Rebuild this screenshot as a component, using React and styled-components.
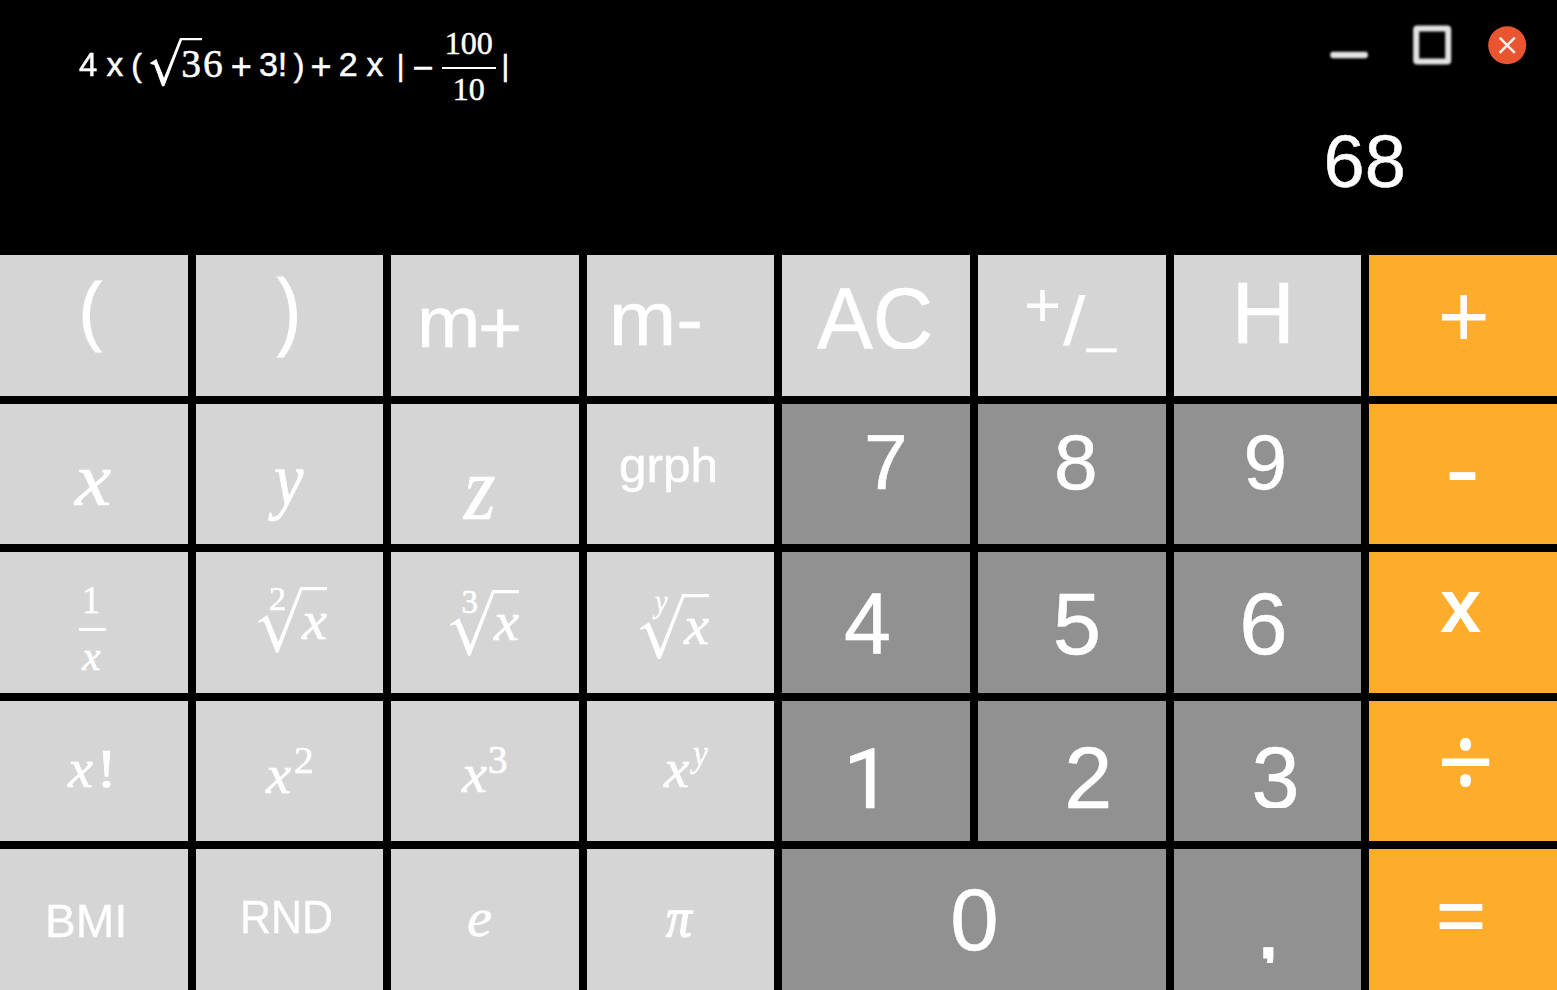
import React from 'react';
import styled, { createGlobalStyle, css } from 'styled-components';

const GlobalStyle = createGlobalStyle`
  * { box-sizing: border-box; }
  body { margin: 0; background: #000; overflow: hidden; }
`;

const SANS = '"Liberation Sans", Arial, sans-serif';
const SERIF = '"Liberation Serif", "Times New Roman", serif';

// Ascent and descent in em, used to seat each run on its baseline.
const faces = {
  sans: { family: SANS, ascent: 0.905, descent: 0.212 },
  bold: { family: SANS, ascent: 0.905, descent: 0.212, weight: 700 },
  serif: { family: SERIF, ascent: 0.891, descent: 0.216 },
  italic: { family: SERIF, ascent: 0.891, descent: 0.216, style: 'italic' },
  roboto: { family: 'Roboto, sans-serif', ascent: 0.9277, descent: 0.2441 },
  noto: { family: '"Noto Sans", sans-serif', ascent: 1.069, descent: 0.293 },
};

// Distance from the top of a line box one em tall to its baseline.
const rise = (face, size) => {
  const a = Math.round(faces[face].ascent * size);
  const d = Math.round(faces[face].descent * size);
  return a + Math.floor((size - a - d) / 2);
};

const Calculator = styled.main`
  display: grid;
  grid-template-rows: 255px 735px;
  width: 1557px;
  height: 990px;
  background: #000;
  color: #fff;
`;

const Display = styled.header`
  display: grid;
  grid-template-columns: 1290px 1fr;
`;

const Formula = styled.div`
  display: grid;
  align-content: start;
  justify-content: start;
`;

const Side = styled.div`
  display: flex;
  flex-direction: column;
`;

const WindowControls = styled.nav`
  display: flex;
  align-items: center;
  height: 66px;
  padding: 24px 0 0 38px;
`;

const WindowButton = styled.button`
  width: 42px;
  height: 42px;
  margin: 0 ${(p) => p.$after || 0}px 0 0;
  padding: 0;
  border: 0;
  background: none;
  svg { display: block; overflow: visible; }
`;

const Result = styled.output`
  display: grid;
  justify-content: start;
`;

const Keypad = styled.section`
  display: grid;
  grid-template-columns: repeat(7, 187.6px) 1fr;
  grid-template-rows: repeat(5, 1fr);
  gap: 8px;
`;

const tones = { light: '#d5d5d5', dark: '#919191', orange: '#fdac2b' };

const Key = styled.button`
  display: grid;
  align-content: start;
  justify-content: start;
  grid-column: span ${(p) => p.$span || 1};
  min-width: 0;
  min-height: 0;
  margin: 0;
  padding: 0;
  border: 0;
  background: ${(p) => tones[p.$tone]};
  color: #fff;
  text-align: left;
`;

// One run of a formula: its origin and baseline share the cell of the whole formula.
const Glyph = styled.span`
  grid-area: 1 / 1;
  justify-self: start;
  align-self: start;
  margin-left: ${(p) => p.$x}px;
  margin-top: ${(p) => p.$base - rise(p.$face, p.$size)}px;
  font-family: ${(p) => faces[p.$face].family};
  font-style: ${(p) => faces[p.$face].style || 'normal'};
  font-weight: ${(p) => faces[p.$face].weight || 400};
  font-size: ${(p) => p.$size}px;
  line-height: 1;
  white-space: nowrap;
  transform: scaleX(${(p) => p.$stretch || 1});
  transform-origin: 0 0;
  -webkit-text-stroke: ${(p) => p.$stroke}px #fff;
  ${(p) => p.$cut !== undefined && css`
    clip-path: inset(-4px -10px ${p.$size - rise(p.$face, p.$size) - p.$cut}px -10px);
  `}
`;

const FractionBar = styled.span`
  grid-area: 1 / 1;
  width: ${(p) => p.$width}px;
  height: ${(p) => p.$height}px;
  margin: ${(p) => p.$y}px 0 0 ${(p) => p.$x}px;
  background: #fff;
`;

const Radical = styled.svg`
  grid-area: 1 / 1;
  display: block;
  margin: ${(p) => p.$y}px 0 0 ${(p) => p.$x}px;
  fill: #fff;
`;

const g = (text, x, base, size, face = 'sans', more = {}) => ({ text, x, base, size, face, ...more });

// The small italic variable that most function keys are built from.
const variable = (text, x, base, more = {}) => g(text, x, base, 54.8, 'italic', { stretch: 1.03, ...more });

const strokes = { sans: 0.5, bold: 0, serif: 0.6, italic: 0.7, roboto: 0.6, noto: 0 };

const Run = ({ item }) => (
  <Glyph $x={item.x} $base={item.base} $size={item.size} $face={item.face}
    $stretch={item.stretch} $stroke={item.stroke ?? strokes[item.face]} $cut={item.cut}>
    {item.text}
  </Glyph>
);

const KeyRadical = ({ x, y }) => (
  <Radical $x={x} $y={y} width="69" height="65.7" viewBox="0 0 207 197">
    <path d="M0 103 L28 84 L61 165 L127 0 H207 V10 H133 L61 197 H54 L20 108 Q14 99 2 108Z" />
  </Radical>
);

const keys = [
  { id: 'open', tone: 'light', runs: [g('(', 79, 81.1, 76.5, 'sans', { stretch: 0.89, stroke: 1.2 })] },
  { id: 'close', tone: 'light', runs: [g(')', 81.8, 84.4, 84.4, 'sans', { stretch: 0.85, stroke: 1 })] },
  { id: 'm-plus', tone: 'light', runs: [g('m', 25.8, 92, 73, 'sans', { stretch: 1.04 }), g('+', 86.8, 98.6, 76)] },
  { id: 'm-minus', tone: 'light', runs: [g('m-', 21.8, 90, 76.2, 'sans', { stretch: 1.06 })] },
  { id: 'ac', tone: 'light', runs: [g('AC', 34.5, 94, 88, 'sans', { stretch: 0.95, cut: 0 })] },
  {
    id: 'sign', tone: 'light', runs: [
      g('+', 46, 71.7, 63.6, 'sans', { stroke: 0 }),
      g('/', 84.6, 90.3, 69, 'sans', { stretch: 1.18, stroke: 0 }),
      g('_', 109.2, 86.5, 52),
    ],
  },
  { id: 'h', tone: 'light', runs: [g('H', 58, 88, 88)] },
  { id: 'add', tone: 'orange', runs: [g('+', 68.7, 92, 89, 'sans', { stroke: 0.2 })] },

  { id: 'x', tone: 'light', runs: [g('x', 75.2, 101.4, 76, 'italic', { stretch: 1.07 })] },
  { id: 'y', tone: 'light', runs: [g('y', 78.4, 101.2, 75.5, 'italic', { stretch: 0.88 })] },
  { id: 'z', tone: 'light', runs: [g('z', 72.6, 115, 90, 'italic', { stretch: 0.9 })] },
  { id: 'graph', tone: 'light', runs: [g('grph', 32.7, 78.4, 48, 'sans', { stretch: 1.03 })] },
  { id: '7', tone: 'dark', runs: [g('7', 81.7, 85.4, 78.5)] },
  { id: '8', tone: 'dark', runs: [g('8', 76.1, 85.4, 78.5)] },
  { id: '9', tone: 'dark', runs: [g('9', 70, 85.4, 78.5)] },
  { id: 'subtract', tone: 'orange', runs: [g('-', 75.4, 99.4, 100, 'sans', { stretch: 1.05, stroke: 0 })] },

  { id: 'inverse', tone: 'light', bar: [79, 75.8, 27, 3], runs: [g('1', 82, 60.8, 39.5, 'serif', { stretch: 0.92 }), g('x', 82.2, 117.4, 41, 'italic')] },
  { id: 'root2', tone: 'light', radical: [62.4, 34.8], runs: [g('2', 73.9, 57.8, 33, 'serif', { stretch: 1.04 }), variable('x', 106.2, 87.2)] },
  { id: 'root3', tone: 'light', radical: [58.8, 37.8], runs: [g('3', 70.2, 60.8, 33, 'serif'), variable('x', 102.4, 88.2)] },
  { id: 'rooty', tone: 'light', radical: [53.5, 41.4], runs: [g('y', 68.6, 60.2, 32.5, 'italic', { stretch: 0.88, stroke: 0.5 }), variable('x', 96.8, 92.2)] },
  { id: '4', tone: 'dark', runs: [g('4', 61.5, 101.8, 88, 'sans', { stretch: 0.96 })] },
  { id: '5', tone: 'dark', runs: [g('5', 74.9, 101.8, 87)] },
  { id: '6', tone: 'dark', runs: [g('6', 65.6, 101.8, 87)] },
  { id: 'multiply', tone: 'orange', runs: [g('x', 70.6, 79.8, 75.8, 'bold', { stretch: 0.98 })] },

  { id: 'factorial', tone: 'light', runs: [variable('x', 68.4, 86.2), g('!', 96, 86.2, 55, 'serif', { stretch: 1.15 })] },
  { id: 'square', tone: 'light', runs: [variable('x', 70.4, 92.2), g('2', 98, 72.2, 38.5, 'serif', { stretch: 1.03 })] },
  { id: 'cube', tone: 'light', runs: [variable('x', 70.6, 91.6), g('3', 96.8, 72.2, 39, 'serif')] },
  { id: 'power', tone: 'light', runs: [variable('x', 76.9, 86.2), g('y', 105.8, 65.4, 37.5, 'italic', { stretch: 0.9, stroke: 0.5 })] },
  { id: '1', tone: 'dark', runs: [g('1', 61, 107.2, 84, 'roboto', { stretch: 1.04 })] },
  { id: '2', tone: 'dark', runs: [g('2', 86.4, 107.2, 86.5)] },
  { id: '3', tone: 'dark', runs: [g('3', 78, 107.2, 86.5, 'sans', { cut: 0 })] },
  { id: 'divide', tone: 'orange', runs: [g('÷', 67.4, 98.8, 106, 'noto', { stretch: 0.945 })] },

  { id: 'bmi', tone: 'light', runs: [g('BMI', 44.7, 87.6, 46.5, 'sans', { stretch: 0.995, stroke: 0.3 })] },
  { id: 'rnd', tone: 'light', runs: [g('RND', 44.9, 83.6, 46.5, 'sans', { stretch: 0.925, stroke: 0.3 })] },
  { id: 'e', tone: 'light', runs: [variable('e', 76.2, 87)] },
  { id: 'pi', tone: 'light', runs: [g('π', 79, 87, 54.5, 'italic', { stretch: 0.94, stroke: 1.4 })] },
  { id: '0', tone: 'dark', span: 2, runs: [g('0', 167.8, 100.6, 87)] },
  { id: 'comma', tone: 'dark', runs: [g(',', 81.2, 108.6, 97, 'sans', { cut: 5, stroke: 0.8 })] },
  { id: 'equals', tone: 'orange', runs: [g('=', 65.3, 99.2, 93, 'noto')] },
];

const expression = [
  g('4', 79.2, 76, 34, 'sans', { stretch: 0.97 }),
  g('x', 106.4, 76, 33.5),
  g('(', 131.3, 75.5, 32),
  g('3', 181.2, 77, 39.5, 'serif', { stroke: 0.5 }),
  g('6', 202.9, 77, 39.5, 'serif', { stroke: 0.5 }),
  g('+', 230.7, 79, 36),
  g('3!', 258.9, 76, 34),
  g(')', 293.7, 75.5, 32),
  g('+', 310.6, 79, 36),
  g('2', 338.7, 76, 34),
  g('x', 366.4, 76, 33.5),
  g('|', 396.8, 75.5, 29.7),
  g('−', 412.5, 79.5, 36),
  g('100', 444.8, 54, 32, 'serif', { stroke: 0.5 }),
  g('10', 452.8, 100, 32, 'serif', { stroke: 0.5 }),
  g('|', 501.5, 75.5, 29.7),
];

export default function App() {
  return (
    <>
      <GlobalStyle />
      <Calculator>
        <Display>
          <Formula>
            {expression.map((item, i) => <Run key={i} item={item} />)}
            <Radical $x={150} $y={38.3} width="52.3" height="48.3" viewBox="0 0 157 145">
              <path d="M0 75 L19 63 L42 119 L90 0 H157 V7 H96 L43 145 H36 L13 81 L2 78Z" />
            </Radical>
            <FractionBar $x={442} $y={66.6} $width={53.5} $height={2.4} />
          </Formula>
          <Side>
            <WindowControls>
              <WindowButton $after={41} aria-label="Minimize">
                <svg width="42" height="42" viewBox="0 0 42 42">
                  <defs>
                    <filter id="soft" x="-20%" y="-60%" width="140%" height="220%">
                      <feGaussianBlur stdDeviation="0.9" />
                    </filter>
                  </defs>
                  <rect x="2.3" y="27.8" width="37.6" height="6.4" rx="2.4" fill="#e4e2e2" filter="url(#soft)" />
                </svg>
              </WindowButton>
              <WindowButton $after={33} aria-label="Maximize">
                <svg width="42" height="42" viewBox="0 0 42 42">
                  <rect x="5.2" y="4.6" width="32" height="33" rx="1" fill="none" stroke="#e4e2e2" strokeWidth="6" filter="url(#soft)" />
                </svg>
              </WindowButton>
              <WindowButton aria-label="Close">
                <svg width="42" height="42" viewBox="0 0 42 42">
                  <circle cx="21.2" cy="21.2" r="19" fill="#e95530" />
                  <path d="M13.6 13.6 L28.8 28.8 M28.8 13.6 L13.6 28.8" stroke="#fff3ee" strokeWidth="2.5" fill="none" />
                </svg>
              </WindowButton>
            </WindowControls>
            <Result>
              <Run item={g('68', 33.5, 121, 74)} />
            </Result>
          </Side>
        </Display>
        <Keypad>
          {keys.map((key) => (
            <Key key={key.id} $tone={key.tone} $span={key.span}>
              {key.radical && <KeyRadical x={key.radical[0]} y={key.radical[1]} />}
              {key.runs.map((item, i) => <Run key={i} item={item} />)}
              {key.bar && <FractionBar $x={key.bar[0]} $y={key.bar[1]} $width={key.bar[2]} $height={key.bar[3]} />}
            </Key>
          ))}
        </Keypad>
      </Calculator>
    </>
  );
}
